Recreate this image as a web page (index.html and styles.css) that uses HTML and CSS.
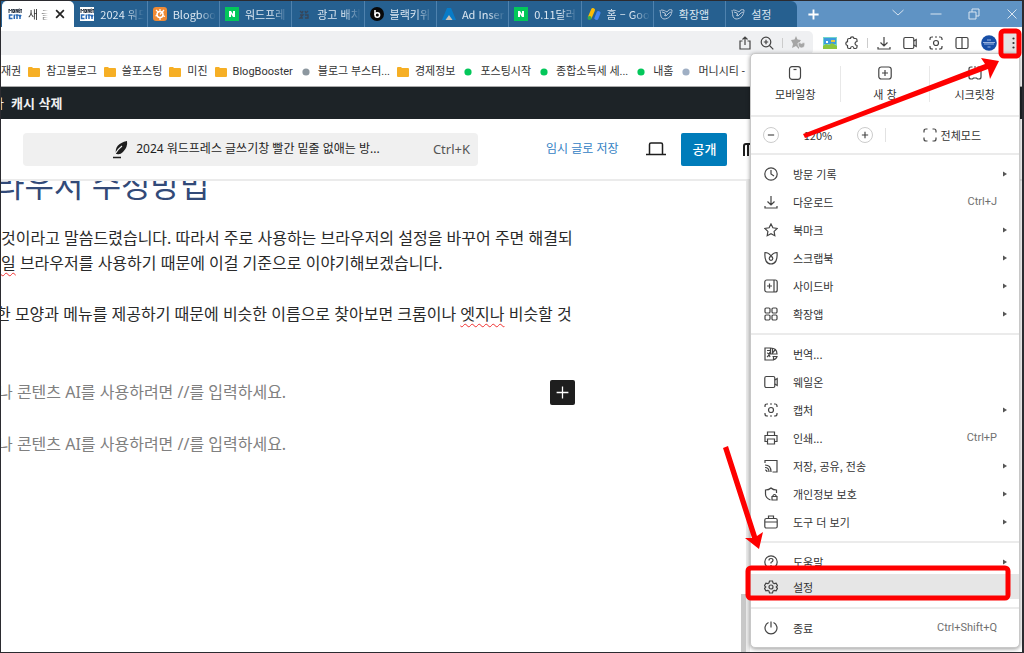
FILE: index.html
```html
<!DOCTYPE html>
<html lang="ko">
<head>
<meta charset="utf-8">
<title>새 글 추가</title>
<link rel="stylesheet" href="styles.css">
</head>
<body>
<svg class="sprite" aria-hidden="true">
  <symbol id="money" viewBox="0 0 14 14"><path d="M0 0h14v14H0z" fill="#fff"/><path d="M1 6V2l1.500 2L4 2v4M5 2.500h1.500V5.500H5zM8 6V2l1.700 3.500V2M11.800 2H10.800v3.500h1M11 3.800h1M12.500 2l.6 1.500.6-1.500M13.100 3.500V6" fill="none" stroke="#26303f" stroke-width="1"/><path d="M4.500 8H1.500v3.500h3M6.300 7.500V12M7.500 8h3M9 8v4M11 7.800l1 2 1-2M12 9.500V12" fill="none" stroke="#2868b4" stroke-width="1.500"/></symbol>
  <symbol id="booster" viewBox="0 0 14 14"><rect width="14" height="14" rx="3" fill="#ee8a35"/><circle cx="7" cy="7.500" r="3" fill="none" stroke="#fff" stroke-width="1.500"/><path d="M3 3l2.500 2.500M11 3L7 7.500M2.500 9l2-1M7 13v-3M9.500 8.500l2.500 1M7 2v3" stroke="#fff" stroke-width="1.200"/></symbol>
  <symbol id="naver" viewBox="0 0 14 14"><rect width="14" height="14" fill="#03c75a"/><path d="M4 10V4h2l2 3V4h2v6H8L6 7v3z" fill="#fff"/></symbol>
  <symbol id="dim" viewBox="0 0 14 14"><path d="M3 4l2 2 1-2M8 4l1 2 2-2M3 8h3L3 11h3M8 8h3v3H8" fill="none" stroke="#36455a" stroke-width="1.300"/></symbol>
  <symbol id="blackkiwi" viewBox="0 0 14 14"><circle cx="7" cy="7" r="7" fill="#080808"/><path d="M5 3v5" stroke="#fff" stroke-width="1.500"/><circle cx="7.300" cy="8" r="2.300" fill="none" stroke="#fff" stroke-width="1.500"/></symbol>
  <symbol id="inserter" viewBox="0 0 14 14"><path d="M5 1h4l5 12H0z" fill="#087bc7"/><path d="M7 8l3.500 5h-7z" fill="#c9c0b4"/></symbol>
  <symbol id="ads" viewBox="0 0 14 14"><path d="M6 3L3 10" stroke="#fbbc04" stroke-width="4" stroke-linecap="round"/><path d="M11.500 6L9.500 11" stroke="#4285f4" stroke-width="4" stroke-linecap="round"/><circle cx="2.500" cy="11" r="2" fill="#34a853"/></symbol>
  <symbol id="whale" viewBox="0 0 14 14"><path d="M1 3c1 5 0 8 4 9 5 0 8-4 8-9-2-1-4 0-5 2-2-1-3-2-6-2M3 5l3 1 1 3 3-3 2-1M5 8l2 1" fill="none" stroke="#b4c5d8" stroke-width="1"/></symbol>
  <symbol id="folder" viewBox="0 0 12 12"><path d="M0 2q0-1 1-1h3l1 1h6q1 0 1 1v7q0 1-1 1H1q-1 0-1-1z" fill="#f6af25"/></symbol>
  <symbol id="dot" viewBox="0 0 12 12"><circle cx="6" cy="6" r="3.600" fill="currentColor"/></symbol>
  <symbol id="share" viewBox="0 0 14 14"><path d="M4.500 5H2v8h10V5H9.500M7 9V1M4.500 3.500L7 1l2.500 2.500"/></symbol>
  <symbol id="magnify" viewBox="0 0 14 14"><circle cx="6" cy="6" r="4.800"/><path d="M9.500 9.500L13.300 13.300M3.800 6h4.400M6 3.800v4.400"/></symbol>
  <symbol id="favorite" viewBox="0 0 14 14"><path d="M5 0l1.500 3.500L10 4 8 7v6L5 10l-4 2 1-4L0 4l3.500-.5z" fill="#a6a6a6" stroke="none"/><path d="M7 7q2-1 3.500.5Q12 6 14 7q0 5-3.500 5T7 7z" fill="#a6a6a6" stroke="#eff0f2" stroke-width=".8"/></symbol>
  <symbol id="photo" viewBox="0 0 14 14"><g stroke="none"><path d="M0 1h14v12H0z" fill="#72d5ca"/><path d="M1 2h12v6H1z" fill="#3d9be0"/><path d="M0 10l3-2 3 1 3-2 5 3v3H0z" fill="#8cc63f"/><path d="M8 4h4v2H8z" fill="#e9c940"/><path d="M3 5h2v2H3z" fill="#fff"/></g></symbol>
  <symbol id="puzzle" viewBox="0 0 14 14"><path d="M4 2.500h1.500q0-1.700 1.700-1.700T9 2.500h1.500Q12 2.500 12 4v1.500q-2 .3-2 2t2 2V11q0 1.500-1.500 1.500H9q-.2-2-1.800-2t-1.700 2H4Q2.500 12.500 2.500 11V9.500Q.8 9.300.8 7.600t1.700-1.900V4Q2.500 2.500 4 2.500z"/></symbol>
  <symbol id="download" viewBox="0 0 14 14"><path d="M7 1v8.500M3.500 6.500L7 10l3.500-3.500M1 11v2h12v-2"/></symbol>
  <symbol id="camera" viewBox="0 0 14 14"><rect x=".8" y="1.500" width="10" height="11" rx="1.500"/><path d="M10.800 5L13.200 3.500v7L10.800 9"/></symbol>
  <symbol id="capture" viewBox="0 0 14 14"><path d="M4 1H3Q1 1 1 3v1M10 1h1q2 0 2 2v1M1 10v1q0 2 2 2h1M13 10v1q0 2-2 2h-1M6 1h2M6 13h2"/><circle cx="7" cy="7" r="2.500"/></symbol>
  <symbol id="split" viewBox="0 0 14 14"><rect x="1" y="1.500" width="12" height="11" rx="1.500"/><path d="M7 1.500v11"/></symbol>
  <symbol id="avatar" viewBox="0 0 16 16"><circle cx="8" cy="8" r="7.800" fill="#174ea6" stroke="none"/><path d="M2 7.500h12M3 9h10M6 5h4M6.500 12h3" stroke="#a9bfe6" stroke-width=".9"/></symbol>
  <symbol id="kebab" viewBox="0 0 14 14"><g fill="#333" stroke="none"><circle cx="8.500" cy="2.500" r="1.100"/><circle cx="8.500" cy="7" r="1.100"/><circle cx="8.500" cy="11.500" r="1.100"/></g></symbol>
  <symbol id="plus" viewBox="0 0 14 14"><path d="M7 1.500v11M1.500 7h11"/></symbol>
  <symbol id="minus" viewBox="0 0 14 14"><path d="M1.500 7h11"/></symbol>
  <symbol id="close" viewBox="0 0 14 14"><path d="M2.500 2.500l9 9M11.500 2.500l-9 9"/></symbol>
  <symbol id="chevron" viewBox="0 0 14 14"><path d="M1.500 3L7 8l5.500-5"/></symbol>
  <symbol id="restore" viewBox="0 0 14 14"><path d="M2 5h7v7H2zM5 5V2h7v7H9"/></symbol>
  <symbol id="phone" viewBox="0 0 14 14"><rect x="1.500" y=".7" width="11" height="12.600" rx="2.500"/><path d="M5.500 3.500h3"/></symbol>
  <symbol id="newwin" viewBox="0 0 14 14"><rect x=".8" y="1" width="12.400" height="12" rx="2.500"/><path d="M7 4v6M4 7h6"/></symbol>
  <symbol id="secret" viewBox="0 0 14 14"><path d="M4.500 1H3Q1 1 1 3v8q0 2 2 2h1.500l1-1h3l1 1H11q2 0 2-2V3q0-2-2-2H9.500M6 1h2"/></symbol>
  <symbol id="full" viewBox="0 0 14 14"><path d="M4.500 1H3Q1 1 1 3v1.500M9.500 1H11q2 0 2 2v1.500M1 9.500V11q0 2 2 2h1.500M13 9.500V11q0 2-2 2H9.500"/></symbol>
  <symbol id="clock" viewBox="0 0 14 14"><circle cx="7" cy="7" r="6.200"/><path d="M7 3v4l3 2"/></symbol>
  <symbol id="star" viewBox="0 0 14 14"><path d="M7 .9l1.900 3.900 4.300.6-3.100 3 .7 4.300L7 10.700l-3.800 2 .7-4.300-3.100-3 4.300-.6z"/></symbol>
  <symbol id="scrap" viewBox="0 0 14 14"><path d="M7 5Q5 1.500 1 1.500q-1 11 6 11.500 7-.5 6-11.500Q9 1.500 7 5z"/><circle cx="7" cy="7.500" r="1.800"/></symbol>
  <symbol id="sidebar" viewBox="0 0 14 14"><rect x=".8" y="1" width="12.400" height="12" rx="2"/><path d="M10 1v12M3 7h5M5.500 4.500v5"/></symbol>
  <symbol id="apps" viewBox="0 0 14 14"><rect x="1" y="1" width="5" height="5" rx="1.200"/><rect x="8" y="1" width="5" height="5" rx="1.200"/><rect x="1" y="8" width="5" height="5" rx="1.200"/><rect x="8" y="8" width="5" height="5" rx="1.200"/></symbol>
  <symbol id="translate" viewBox="0 0 14 14"><path d="M6.500 1H1v12h8.500V10M6.500 1v6H13Q13 1 6.500 1M8.500 9.500H13q-1 3-3.500 3M3 3.500h3M3 6q2 0 3 4M6 5q-1 4-3 5M8.500 1.500v5M11 3l-3 3.500"/></symbol>
  <symbol id="print" viewBox="0 0 14 14"><path d="M3.500 4.500V1h7v3.500M3.500 10.500H1V4.500h12v6h-2.500"/><path d="M3.500 8h7v5h-7z"/></symbol>
  <symbol id="cast" viewBox="0 0 14 14"><path d="M1 4V1.500h12V13H8.500M1 6q6 0 6 7M1 8.500q4 0 4 4.500M1 11q2 0 2 2"/></symbol>
  <symbol id="shield" viewBox="0 0 14 14"><path d="M12.500 6V3Q9 3 7 1 5 3 1.500 3v4q0 4 5 6M8 9.500h5V13H8zM9 9.500V8.500q1.500-2 3 0v1"/></symbol>
  <symbol id="case" viewBox="0 0 14 14"><rect x=".8" y="3.500" width="12.400" height="9.500" rx="1.500"/><path d="M4.500 3.500V1h5v2.500M1 7h12"/></symbol>
  <symbol id="help" viewBox="0 0 14 14"><circle cx="7" cy="7" r="6.200"/><path d="M5 5.500Q5 3.500 7 3.500t2 1.800Q9 6.500 7 7.500V8.500M7 10v1"/></symbol>
  <symbol id="gear" viewBox="0 0 14 14"><path d="M5.500 1h3l.5 1.900 1.200.7 1.900-.5 1.400 2.500L12.200 7l1.300 1.400-1.400 2.500-1.900-.5-1.200.7-.5 1.900h-3L5 11.100l-1.200-.7-1.900.5L.5 8.400 1.800 7 .5 5.600l1.400-2.500 1.900.5L5 2.900z"/><circle cx="7" cy="7" r="2"/></symbol>
  <symbol id="power" viewBox="0 0 14 14"><path d="M4.500 1.500a6 6 0 1 0 5 0M7 .5v6"/></symbol>
  <symbol id="arrow" viewBox="0 0 6 8"><path d="M1 1.500L5 4 1 6.500z" fill="#555" stroke="none"/></symbol>
</svg>

<div class="browser">
  <div class="tabstrip">
    <div class="tabs">
      <button class="tab active"><svg><use href="#money"/></svg><span>새 글</span><svg class="x"><use href="#close"/></svg></button>
      <button class="tab"><svg><use href="#money"/></svg><span>2024 워드</span></button>
      <button class="tab"><svg><use href="#booster"/></svg><span>Blogboos</span></button>
      <button class="tab"><svg><use href="#naver"/></svg><span>워드프레</span></button>
      <button class="tab"><svg><use href="#dim"/></svg><span>광고 배치</span></button>
      <button class="tab"><svg><use href="#blackkiwi"/></svg><span>블랙키위</span></button>
      <button class="tab"><svg><use href="#inserter"/></svg><span>Ad Inser</span></button>
      <button class="tab"><svg><use href="#naver"/></svg><span>0.11달러</span></button>
      <button class="tab"><svg><use href="#ads"/></svg><span>홈 – Goo</span></button>
      <button class="tab"><svg><use href="#whale"/></svg><span>확장앱</span></button>
      <button class="tab"><svg><use href="#whale"/></svg><span>설정</span></button>
    </div>
    <button class="newtab" aria-label="새 탭"><svg><use href="#plus"/></svg></button>
    <div class="winctl">
      <button aria-label="탭 목록"><svg><use href="#chevron"/></svg></button>
      <button aria-label="최소화"><svg><use href="#minus"/></svg></button>
      <button aria-label="이전 크기로"><svg><use href="#restore"/></svg></button>
      <button aria-label="닫기"><svg><use href="#close"/></svg></button>
    </div>
  </div>

  <div class="toolbar">
    <div class="omnibox">
      <button aria-label="공유"><svg><use href="#share"/></svg></button>
      <button aria-label="확대"><svg><use href="#magnify"/></svg></button>
      <i class="bar"></i>
      <button aria-label="북마크"><svg><use href="#favorite"/></svg></button>
    </div>
    <div class="tools">
      <button aria-label="사진"><svg><use href="#photo"/></svg></button>
      <button aria-label="확장앱"><svg><use href="#puzzle"/></svg></button>
      <i class="bar"></i>
    </div>
    <div class="tools wide">
      <button aria-label="다운로드"><svg><use href="#download"/></svg></button>
      <button aria-label="웨일온"><svg><use href="#camera"/></svg></button>
      <button aria-label="캡처"><svg><use href="#capture"/></svg></button>
      <button aria-label="분할"><svg><use href="#split"/></svg></button>
      <button aria-label="프로필"><svg class="avatar"><use href="#avatar"/></svg></button>
    </div>
    <button class="kebab" aria-label="메뉴"><svg><use href="#kebab"/></svg></button>
  </div>

  <nav class="bookmarks">
    <a href="#">재권</a>
    <a href="#"><svg><use href="#folder"/></svg>참고블로그</a>
    <a href="#"><svg><use href="#folder"/></svg>쓸포스팅</a>
    <a href="#"><svg><use href="#folder"/></svg>미진</a>
    <a href="#"><svg><use href="#folder"/></svg>BlogBooster</a>
    <a href="#"><svg class="gray"><use href="#dot"/></svg>블로그 부스터...</a>
    <a href="#"><svg><use href="#folder"/></svg>경제정보</a>
    <a href="#"><svg class="green"><use href="#dot"/></svg>포스팅시작</a>
    <a href="#"><svg class="green"><use href="#dot"/></svg>종합소득세 세...</a>
    <a href="#"><svg class="green"><use href="#dot"/></svg>내홈</a>
    <a href="#"><svg class="blue"><use href="#dot"/></svg>머니시티 -</a>
  </nav>

  <div class="adminbar"><a class="cut" href="#">가</a><a href="#">캐시 삭제</a></div>

  <header class="edhead">
    <button class="command">
      <span class="doc"><svg><path d="M4 14Q2 4 15 1q1 6-4 11-3 3-6 2M4 14Q7 10 10 7" fill="#1e1e1e"/><path d="M3 14Q6 9 10 6" fill="none" stroke="#f0f0f0"/><path d="M1 17.500h8" stroke="#1e1e1e" stroke-width="1.500"/></svg>2024 워드프레스 글쓰기창 빨간 밑줄 없애는 방...</span>
      <span class="key">Ctrl+K</span>
    </button>
    <a class="draft" href="#">임시 글로 저장</a>
    <button class="plain" aria-label="미리보기"><svg><path d="M3.500 13V3.500Q3.500 2 5 2h10q1.500 0 1.500 1.500V13M0 13.500h20" fill="none" stroke="#1e1e1e" stroke-width="1.500"/></svg></button>
    <button class="publish">공개</button>
    <button class="plain" aria-label="설정"><svg><path d="M2 15V5q0-2 2-2h10v12M6 15V4" fill="none" stroke="#1e1e1e" stroke-width="2"/></svg></button>
  </header>

  <main class="editor">
    <article class="post">
      <h2>라우저 수정방법</h2>
      <p>것이라고 말씀드렸습니다. 따라서 주로 사용하는 브라우저의 설정을 바꾸어 주면 해결되<br><u>일</u> 브라우저를 사용하기 때문에 이걸 기준으로 이야기해보겠습니다.</p>
      <p class="cutline">한 모양과 메뉴를 제공하기 때문에 비슷한 이름으로 찾아보면 크롬이나 <u>엣지나</u> 비슷할 것</p>
      <div class="block"><p class="hint">나 콘텐츠 AI를 사용하려면 //를 입력하세요.</p><button aria-label="블록 추가"><svg><use href="#plus"/></svg></button></div>
      <div class="block"><p class="hint">나 콘텐츠 AI를 사용하려면 //를 입력하세요.</p></div>
    </article>
    <div class="scroll"><i></i></div>
    <aside class="side"></aside>
  </main>

  <div class="menu" role="menu">
    <div class="tiles">
      <button><svg><use href="#phone"/></svg>모바일창</button>
      <button><svg><use href="#newwin"/></svg>새 창</button>
      <button><svg><use href="#secret"/></svg>시크릿창</button>
    </div>
    <div class="zoom">
      <button class="round" aria-label="축소"><svg><use href="#minus"/></svg></button>
      <span>120%</span>
      <button class="round" aria-label="확대"><svg><use href="#plus"/></svg></button>
      <button class="fullscreen"><svg><use href="#full"/></svg>전체모드</button>
    </div>
    <div class="group">
      <button><svg><use href="#clock"/></svg><span>방문 기록</span><svg class="arr"><use href="#arrow"/></svg></button>
      <button><svg><use href="#download"/></svg><span>다운로드</span><kbd>Ctrl+J</kbd></button>
      <button><svg><use href="#star"/></svg><span>북마크</span><svg class="arr"><use href="#arrow"/></svg></button>
      <button><svg><use href="#scrap"/></svg><span>스크랩북</span><svg class="arr"><use href="#arrow"/></svg></button>
      <button><svg><use href="#sidebar"/></svg><span>사이드바</span><svg class="arr"><use href="#arrow"/></svg></button>
      <button><svg><use href="#apps"/></svg><span>확장앱</span><svg class="arr"><use href="#arrow"/></svg></button>
    </div>
    <div class="group">
      <button><svg><use href="#translate"/></svg><span>번역...</span></button>
      <button><svg><use href="#camera"/></svg><span>웨일온</span></button>
      <button><svg><use href="#capture"/></svg><span>캡처</span><svg class="arr"><use href="#arrow"/></svg></button>
      <button><svg><use href="#print"/></svg><span>인쇄...</span><kbd>Ctrl+P</kbd></button>
      <button><svg><use href="#cast"/></svg><span>저장, 공유, 전송</span><svg class="arr"><use href="#arrow"/></svg></button>
      <button><svg><use href="#shield"/></svg><span>개인정보 보호</span><svg class="arr"><use href="#arrow"/></svg></button>
      <button><svg><use href="#case"/></svg><span>도구 더 보기</span><svg class="arr"><use href="#arrow"/></svg></button>
    </div>
    <div class="group tight">
      <button><svg><use href="#help"/></svg><span>도움말</span><svg class="arr"><use href="#arrow"/></svg></button>
      <button class="on"><svg><use href="#gear"/></svg><span>설정</span></button>
    </div>
    <div class="group">
      <button><svg><use href="#power"/></svg><span>종료</span><kbd>Ctrl+Shift+Q</kbd></button>
    </div>
  </div>

  <svg class="marks" viewBox="0 0 324 653" aria-hidden="true">
    <g fill="none" stroke="#fe0000" stroke-width="5">
      <rect x="301" y="31" width="18" height="25" rx="3"/>
      <rect x="48" y="568" width="260" height="30" rx="3"/>
    </g>
    <g fill="#fe0000">
      <path d="M103 134L285 64 281 58 299 61 290 79 288 69 105 138z"/>
      <path d="M23 448L28 446 57 536 63 532 59 549 45 538 52 538z"/>
    </g>
  </svg>
</div>
</body>
</html>
```

FILE: styles.css
```css
* { box-sizing: border-box; }
body {
  margin: 0;
  font: 11px/16px "Noto Sans CJK KR", sans-serif;
  color: #333;
  background: #fff;
}
button {
  font: inherit;
  color: inherit;
  background: none;
  border: 0;
  padding: 0;
}
a { color: inherit; text-decoration: none; }
svg {
  width: 14px;
  height: 14px;
  flex: none;
  display: block;
  fill: none;
  stroke: #444;
  stroke-width: 1.2;
}
.sprite { position: absolute; width: 0; height: 0; }
.sprite symbol { overflow: visible; }
.browser {
  position: relative;
  display: flex;
  flex-direction: column;
  min-height: 100vh;
  border: 1px solid #2b2b30;
  border-right-width: 2px;
  overflow: hidden;
}

/* tab strip */
.tabstrip { display: flex; align-items: stretch; height: 26px; background: #5f93c4; }
.tabs { display: flex; width: 78%; padding-left: 1px; background: #266090; border-top-right-radius: 6px; }
.tab {
  display: flex;
  flex: 1;
  min-width: 0;
  align-items: center;
  gap: 6px;
  padding: 0 3px 0 5px;
  color: #dce7f1;
  border-left: 1px solid #4f82ae;
}
.tab svg { stroke: none; }
.tab span {
  flex: 1;
  min-width: 0;
  text-align: left;
  white-space: nowrap;
  overflow: hidden;
  mask-image: linear-gradient(90deg, #000 60%, transparent);
}
.tab:nth-last-child(-n+2) span { mask-image: none; }
.tab.active { background: #fff; color: #333; border-color: #fff; border-radius: 5px 5px 0 0; }
.tab.active + .tab { border-color: #266090; }
.tab .x { width: 12px; height: 12px; margin-right: 5px; stroke: #222; stroke-width: 2; }
.newtab { padding: 0 10px; }
.newtab svg { stroke: #fff; stroke-width: 2; width: 13px; height: 13px; }
.winctl { display: flex; align-items: center; gap: 24px; margin-left: auto; padding-right: 3px; }
.winctl svg { stroke: #d8e4f0; width: 14px; height: 14px; stroke-width: 1; }

/* toolbar */
.toolbar { display: flex; align-items: center; height: 31px; }
.omnibox {
  display: flex;
  align-items: center;
  justify-content: flex-end;
  gap: 8px;
  flex: 1;
  height: 24px;
  padding-right: 8px;
  background: #eff0f2;
  border-radius: 0 5px 5px 0;
}
.bar { width: 1px; height: 10px; background: #ccc; }
.tools { display: flex; align-items: center; gap: 8px; padding-left: 10px; }
.tools.wide { gap: 12px; padding-left: 9px; }
.tools .avatar { width: 16px; height: 16px; }
.kebab { margin: 0 2px 0 7px; padding: 5px 1px; background: #e3e3e3; }

/* bookmarks */
.bookmarks {
  display: flex;
  align-items: center;
  gap: 7px;
  height: 28px;
  font-family: Roboto, "Noto Sans CJK KR", sans-serif;
  white-space: nowrap;
}
.bookmarks a { display: flex; align-items: center; gap: 6px; }
.bookmarks svg { width: 12px; height: 12px; stroke: none; }
.gray { color: #8c979f; }
.green { color: #03c75a; }
.blue { color: #9fafc4; }

/* site bar */
.adminbar {
  display: flex;
  align-items: center;
  gap: 7px;
  height: 33px;
  color: #f0f0f1;
  background: #1d2327;
  border-top: 1px solid #aaa;
  font-size: 13px;
  font-weight: 700;
}
.adminbar .cut { margin-left: -9px; font-weight: 400; }

/* editor header */
.edhead {
  display: flex;
  align-items: center;
  height: 62px;
  padding-left: 22px;
  border-bottom: 2px solid #ebebeb;
  font-family: "Noto Sans", "Noto Sans CJK KR", sans-serif;
  font-size: 12px;
  color: #1e1e1e;
}
.command {
  display: flex;
  align-items: center;
  flex: none;
  width: 455px;
  height: 33px;
  padding: 0 8px;
  background: #f0f0f0;
  border-radius: 4px;
}
.doc { display: flex; flex: 1; align-items: center; justify-content: center; gap: 8px; padding-left: 28px; }
.doc svg { width: 16px; height: 19px; stroke: none; }
.key { font-size: 13px; color: #555; }
.draft { margin-left: 68px; color: #3582c4; }
.plain { margin-left: 28px; }
.plain svg { width: 20px; height: 16px; }
.publish {
  height: 33px;
  margin-left: 15px;
  padding: 0 11px;
  color: #fff;
  background: #007cba;
  border-radius: 2px;
  font-size: 13px;
  font-weight: 500;
}
.publish + .plain { margin-left: 15px; }

/* editor canvas */
.editor { display: flex; flex: 1; }
.post {
  flex: none;
  width: 574px;
  font-family: "Noto Sans", "Noto Sans CJK KR", sans-serif;
  font-size: 16px;
  line-height: 25px;
  color: #2a2a2a;
}
.post h2 {
  height: 44px;
  margin: -18px 0 19px -6px;
  font-size: 32px;
  line-height: 44px;
  font-weight: 400;
  color: #324a78;
  clip-path: inset(18px 0 0 0);
}
.post p { margin: 0 0 26px; white-space: nowrap; }
.post .cutline { margin: 0 0 53px -5px; }
.post u { text-decoration: underline wavy #f03030 1px; text-underline-offset: 3px; }
.block { display: flex; align-items: center; justify-content: space-between; height: 25px; margin-bottom: 27px; }
.post .hint { margin: 0 0 0 -3px; color: #808080; }
.block button { padding: 5px; background: #1e1e1e; border-radius: 2px; }
.block button svg { width: 15px; height: 15px; stroke: #fff; }
.scroll { display: flex; flex-direction: column; justify-content: flex-end; margin-left: auto; }
.scroll i { width: 5px; height: 58px; background: #c8c8c8; }
.side { width: 276px; border-left: 4px solid #ececec; }

/* browser menu */
.menu {
  position: absolute;
  top: 52px;
  right: 2px;
  width: 270px;
  background: #fff;
  border: 1px solid #c8c8c8;
  border-radius: 5px;
  box-shadow: 0 1px 4px #0006;
}
.tiles { display: flex; padding: 12px 0 13px; }
.tiles button { display: flex; flex: 1; flex-direction: column; align-items: center; gap: 6px; }
.tiles button + button { border-left: 1px solid #e8e8e8; }
.zoom { display: flex; align-items: center; height: 38px; padding: 0 12px; border-top: 2px solid #ebebeb; }
.round { padding: 3px; border: 1px solid #ccc; border-radius: 50%; }
.round svg { width: 8px; height: 8px; stroke-width: 2; }
.zoom span { flex: none; width: 78px; text-align: center; }
.fullscreen { display: flex; align-items: center; gap: 4px; margin-left: auto; padding: 0 26px 0 37px; border-left: 1px solid #e2e2e2; line-height: 12px; }
.group { padding: 5px 0; border-top: 2px solid #ebebeb; }
.group button { display: flex; align-items: center; width: 100%; height: 28px; padding: 0 11px 0 13px; text-align: left; }
.group span { flex: 1; padding-left: 15px; }
.group .arr { width: 6px; height: 8px; }
.group kbd { padding-right: 11px; font: 11px/16px Roboto, sans-serif; color: #707070; }
.group.tight { padding: 6px 0 8px; }
.group.tight button { height: 25px; }
.tight .on { background: #e6e6e6; }

/* red call-outs */
.marks { position: absolute; top: -1px; right: -2px; width: 324px; height: 653px; stroke: none; pointer-events: none; }
```
